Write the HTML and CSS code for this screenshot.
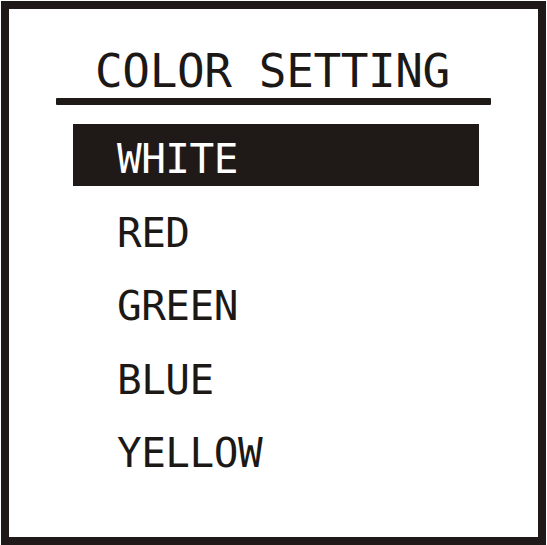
FILE: index.html
```html
<!DOCTYPE html>
<html lang="en">
<head>
<meta charset="utf-8">
<title>Color Setting</title>
<link rel="stylesheet" href="styles.css">
</head>
<body>
<div class="frame">
  <div class="title">COLOR SETTING</div>
  <div class="rule"></div>
  <ul class="menu">
    <li class="item selected">WHITE</li>
    <li class="item">RED</li>
    <li class="item">GREEN</li>
    <li class="item">BLUE</li>
    <li class="item">YELLOW</li>
  </ul>
</div>
</body>
</html>
```

FILE: styles.css
```css
html, body {
  margin: 0;
  padding: 0;
  background: #ffffff;
}

body {
  font-family: "DejaVu Sans Mono", "Liberation Mono", monospace;
  color: #1c1815;
}

.frame {
  box-sizing: border-box;
  width: 545px;
  height: 544px;
  margin: 1px 1px 0 1px;
  border: 8px solid #1f1a17;
  padding-top: 39px;
  display: flex;
  flex-direction: column;
}

.title {
  font-size: 46px;
  line-height: 46px;
  height: 46px;
  letter-spacing: -0.4px;
  text-align: center;
  white-space: nowrap;
  padding-right: 2px;
}

.rule {
  width: 435px;
  height: 7px;
  margin: 4px auto 0;
  background: #1f1a17;
  border-radius: 1px;
}

.menu {
  list-style: none;
  margin: 19px 0 0 64px;
  padding: 0;
  width: 406px;
  display: flex;
  flex-direction: column;
  gap: 11.5px;
}

.item {
  box-sizing: border-box;
  height: 62px;
  padding: 8px 0 0 44px;
  font-size: 41px;
  line-height: 54px;
  letter-spacing: -0.5px;
  white-space: nowrap;
}

.item.selected {
  background: #1f1a17;
  color: #ffffff;
}
```
